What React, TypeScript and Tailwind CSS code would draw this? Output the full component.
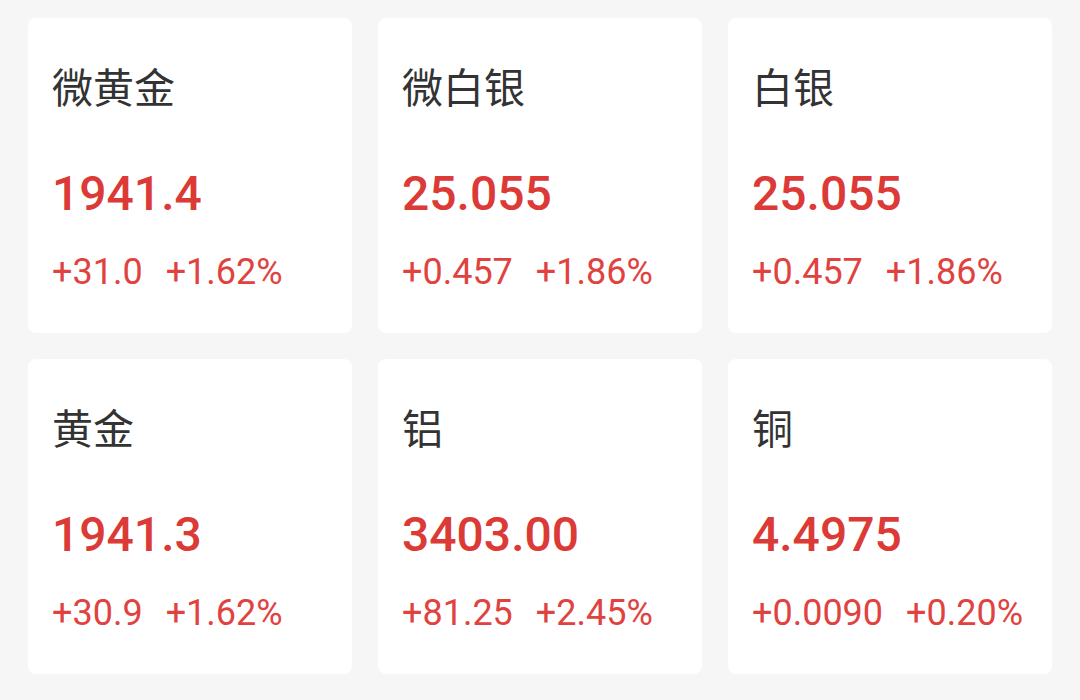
const quotes = [
  { name: "微黄金", price: "1941.4", change: "+31.0", pct: "+1.62%" },
  { name: "微白银", price: "25.055", change: "+0.457", pct: "+1.86%" },
  { name: "白银", price: "25.055", change: "+0.457", pct: "+1.86%" },
  { name: "黄金", price: "1941.3", change: "+30.9", pct: "+1.62%" },
  { name: "铝", price: "3403.00", change: "+81.25", pct: "+2.45%" },
  { name: "铜", price: "4.4975", change: "+0.0090", pct: "+0.20%" },
];

function QuoteCard({ name, price, change, pct }: { name: string; price: string; change: string; pct: string }) {
  return (
    <div className="bg-white rounded-lg h-[315px] pl-[24px] pt-[43px]">
      <div
        className="text-[41px] leading-[48px] text-[#333333]"
        style={{ fontFamily: '"Noto Sans CJK SC", "Noto Sans", sans-serif' }}
      >
        {name}
      </div>
      <div className="mt-[57px] text-[48px] leading-[56px] font-medium text-[#dc3a36]">
        {price}
      </div>
      <div className="mt-[30px] flex gap-[23px] text-[36px] leading-[40px] text-[#e0433f]">
        <span>{change}</span>
        <span>{pct}</span>
      </div>
    </div>
  );
}

export default function App() {
  return (
    <div
      className="min-h-screen bg-[#f6f6f6] px-[28px] pt-[18px] pb-[20px]"
      style={{ fontFamily: 'Roboto, "Noto Sans CJK SC", sans-serif' }}
    >
      <div className="grid grid-cols-3 gap-x-[26px] gap-y-[26px]">
        {quotes.map((q) => (
          <QuoteCard key={q.name} {...q} />
        ))}
        <div className="bg-white rounded-lg h-[315px]" />
        <div className="bg-white rounded-lg h-[315px]" />
        <div className="bg-white rounded-lg h-[315px]" />
      </div>
    </div>
  );
}
